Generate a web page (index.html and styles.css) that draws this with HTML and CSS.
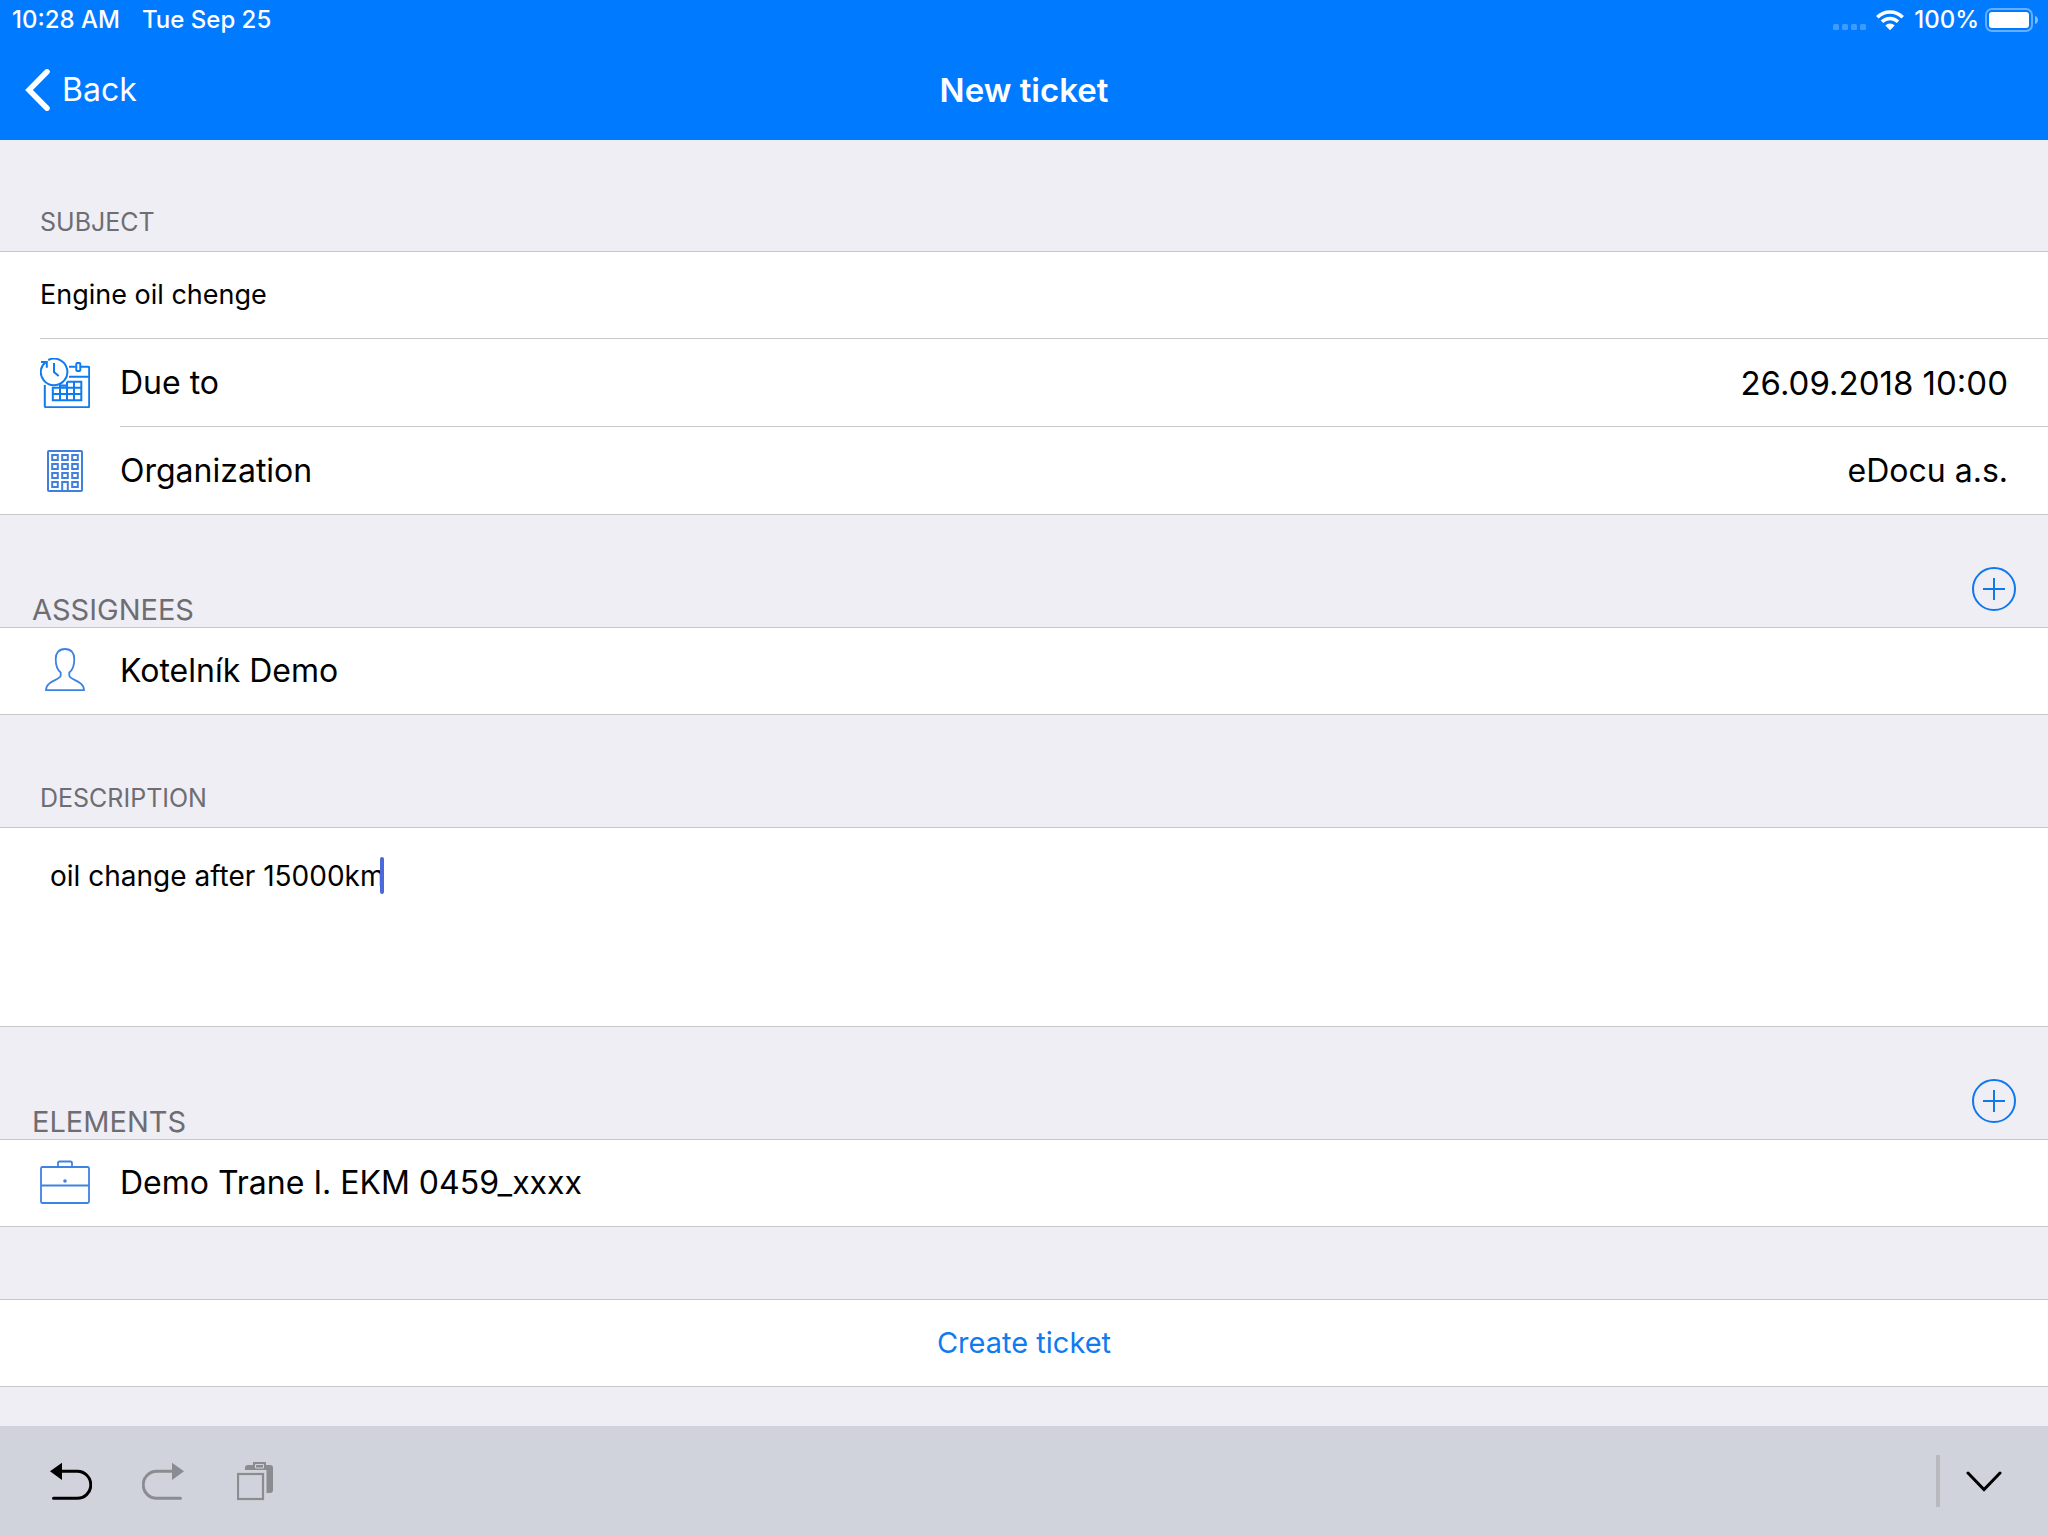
FILE: index.html
```html
<!DOCTYPE html>
<html lang="en">
<head>
<meta charset="utf-8">
<meta name="viewport" content="width=device-width, initial-scale=1">
<title>New ticket</title>
<link rel="stylesheet" href="styles.css">
</head>
<body>
<header class="header">
  <div class="status">
    <span>10:28 AM</span>
    <span class="status-date">Tue Sep 25</span>
    <svg class="status-dots" width="34" height="24" viewBox="0 0 34 24" aria-hidden="true"><g fill="#fff" opacity=".25"><rect x="0" y="16" width="6" height="6" rx="1.5"/><rect x="9" y="16" width="6" height="6" rx="1.5"/><rect x="18" y="16" width="6" height="6" rx="1.5"/><rect x="27" y="16" width="6" height="6" rx="1.5"/></g></svg>
    <svg width="28" height="24" viewBox="0 0 28 24" aria-hidden="true"><g fill="none" stroke="#fff" stroke-width="3.6"><path d="M1.3 9.2a18 18 0 0 1 25.4 0"/><path d="M6 13.8a11.4 11.4 0 0 1 16 0"/></g><path d="M14 22.2l-4.7-4.8a6.7 6.7 0 0 1 9.4 0z" fill="#fff"/></svg>
    <span class="status-level">100%</span>
    <svg width="54" height="24" viewBox="0 0 54 24" aria-hidden="true"><rect x="1" y="1" width="46" height="22" rx="6" fill="none" stroke="#fff" stroke-width="2" opacity=".4"/><rect x="4" y="4" width="40" height="16" rx="3" fill="#fff"/><path d="M50 8c4 1 4 7 0 8z" fill="#fff" opacity=".5"/></svg>
  </div>
  <nav class="navbar">
    <a class="back" href="#"><svg width="26" height="44" viewBox="0 0 26 44" aria-hidden="true"><path d="M23 3.800L5 22l18 18.200" fill="none" stroke="#fff" stroke-width="5.500" stroke-linecap="round"/></svg>Back</a>
    <h1 class="title">New ticket</h1>
  </nav>
</header>

<main class="form">
  <div class="section-head section-head-first"><label class="section-label" for="subject">SUBJECT</label></div>
  <div class="group">
    <div class="row row-plain"><div class="row-body"><input class="subject" id="subject" type="text" value="Engine oil chenge"></div></div>
    <div class="row">
      <svg class="icon" viewBox="0 0 50 50" aria-hidden="true"><g fill="none" stroke="#0f7bf0" stroke-width="2">
        <path d="M8.200 2A13.300 13.300 0 1 1 1 11.500Q1.500 8 5.600 4M1 4h5.800v5.800M14 5v9l4.700 4"/>
        <path d="M29 8.800h6.800M40.500 8.800H48q1.200 0 1.200 1.200v38q0 1.200-1.200 1.200H6Q4.800 49.200 4.800 48V27M29 18.800h20"/><rect x="36.300" y="5" width="4" height="8" rx="1"/>
        <path d="M27 23.800h14.300v18.400H12.800V29.800h28.500M12.800 36h28.500M20 42V27.500h7M27 42V23.800M34 42V23.800"/></g></svg>
      <div class="row-body"><span>Due to</span><span class="value">26.09.2018 10:00</span></div>
    </div>
    <div class="row">
      <svg class="icon" viewBox="0 0 50 50" aria-hidden="true"><g fill="none" stroke="#407fdc" stroke-width="2">
        <rect x="8" y="5" width="34" height="40" rx="1"/>
        <path d="M12.200 9h5.600v5h-5.600zM22.200 9h5.600v5h-5.600zM32.200 9h5.600v5h-5.600zM12.200 18h5.600v5h-5.600zM22.200 18h5.600v5h-5.600zM32.200 18h5.600v5h-5.600zM12.200 27h5.600v5h-5.600zM22.200 27h5.600v5h-5.600zM32.200 27h5.600v5h-5.600zM12.200 36h5.600v5h-5.600zM32.200 36h5.600v5h-5.600zM22.200 45v-9h5.600v9"/></g></svg>
      <div class="row-body"><span>Organization</span><span>eDocu a.s.</span></div>
    </div>
  </div>

  <div class="section-head section-head-add">
    <h2 class="section-label">ASSIGNEES</h2>
    <button class="add" type="button" aria-label="Add assignee"><svg width="44" height="44" viewBox="0 0 44 44" fill="none" stroke="#0f78ec" stroke-width="2"><circle cx="22" cy="22" r="21"/><path d="M22 11v22M11 22h22"/></svg></button>
  </div>
  <div class="group">
    <div class="row">
      <svg class="icon" viewBox="0 0 50 50" aria-hidden="true"><path d="M25 3C18.500 3 15.700 7.500 15.700 13C15.700 20 17.500 24 20.700 26.500V29.500C20.700 34 6 34.500 6 44.200H44C44 34.500 29.300 34 29.300 29.500V26.500C32.500 24 34.300 20 34.300 13C34.300 7.500 31.500 3 25 3Z" fill="none" stroke="#3f83e2" stroke-width="1.800"/></svg>
      <div class="row-body"><span>Kotelník Demo</span></div>
    </div>
  </div>

  <div class="section-head"><label class="section-label" for="description">DESCRIPTION</label></div>
  <div class="group group-note">
    <textarea class="note" id="description">oil change after 15000km</textarea>
    <span class="caret"></span>
  </div>

  <div class="section-head section-head-add">
    <h2 class="section-label">ELEMENTS</h2>
    <button class="add" type="button" aria-label="Add element"><svg width="44" height="44" viewBox="0 0 44 44" fill="none" stroke="#0f78ec" stroke-width="2"><circle cx="22" cy="22" r="21"/><path d="M22 11v22M11 22h22"/></svg></button>
  </div>
  <div class="group">
    <div class="row">
      <svg class="icon" viewBox="0 0 50 50" aria-hidden="true"><g fill="none" stroke="#3f83e2" stroke-width="1.800"><rect x="1" y="9" width="48" height="36" rx="1.500"/><path d="M18 9V5q0-1.500 1.500-1.500h11Q32 3.500 32 5v4M1 27.500h48"/></g><circle cx="25" cy="23" r="1.800" fill="#3f83e2"/></svg>
      <div class="row-body"><span>Demo Trane I. EKM 0459_xxxx</span></div>
    </div>
  </div>

  <button class="create" type="submit">Create ticket</button>
</main>

<footer class="toolbar">
  <button class="tool" type="button" aria-label="Undo"><svg width="42" height="40" viewBox="0 0 42 40"><path d="M0 10.300L12 1.700v17.300z"/><path d="M10 10.300h17.300a13.500 13.500 0 0 1 0 27H3.500" fill="none" stroke="#000" stroke-width="3" stroke-linecap="round"/></svg></button>
  <button class="tool" type="button" aria-label="Redo"><svg width="42" height="40" viewBox="0 0 42 40"><path d="M42 10.300L30 1.700v17.300z" fill="#8b8c90"/><path d="M32 10.300H14.700a13.500 13.500 0 0 0 0 27h23.800" fill="none" stroke="#8b8c90" stroke-width="3" stroke-linecap="round"/></svg></button>
  <button class="tool tool-paste" type="button" aria-label="Paste"><svg width="36" height="40" viewBox="0 0 36 40"><rect x="1" y="13" width="25" height="25" fill="none" stroke="#8b8c90" stroke-width="2.200"/><path d="M8 9V7q0-3 3-3h5V1h13v3h4q3 0 3 3v22q0 3-3 3h-3.500V9z" fill="#8b8c90"/><path d="M18.500 3.500h8v3.500h-8z" fill="none" stroke="#d0d3db" stroke-width="1"/></svg></button>
  <span class="divider"></span>
  <button class="tool" type="button" aria-label="Hide keyboard"><svg width="36" height="24" viewBox="0 0 36 24"><path d="M2 4l16 16.500L34 4" fill="none" stroke="#000" stroke-width="3" stroke-linecap="round"/></svg></button>
</footer>
</body>
</html>
```

FILE: styles.css
```css
* {
  box-sizing: border-box;
}

body {
  display: flex;
  flex-direction: column;
  min-height: 100vh;
  margin: 0;
  background: #efeef5;
  color: #000;
  font-family: Inter, "Liberation Sans", sans-serif;
  font-size: 32px;
  line-height: 40px;
}

button,
input,
textarea {
  margin: 0;
  padding: 0;
  border: 0;
  border-radius: 0;
  outline: 0;
  background: none;
  color: inherit;
  font: inherit;
}

svg {
  display: block;
  flex: none;
}

.header {
  background: #007aff;
  color: #fff;
}

.status {
  display: flex;
  align-items: center;
  height: 40px;
  padding: 0 9px 0 12px;
  font-size: 24px;
  font-weight: 500;
}

.status-date {
  margin-left: 22px;
}

.status-dots {
  margin-right: 9px;
  margin-left: auto;
}

.status-level {
  margin: 0 6px 0 10px;
}

.navbar {
  display: grid;
  grid-template-columns: 1fr auto 1fr;
  align-items: center;
  height: 100px;
  padding: 0 24px;
}

.back {
  display: flex;
  align-items: center;
  gap: 12px;
  color: inherit;
  text-decoration: none;
}

.title {
  margin: 0;
  font-size: 33px;
  font-weight: 600;
}

.section-head {
  display: flex;
  align-items: flex-end;
  justify-content: space-between;
  height: 112px;
  padding: 0 32px 12px 40px;
  color: #6d6d72;
  font-size: 25px;
  line-height: 34px;
}

.section-head-first {
  height: 111px;
}

.section-head-add {
  padding: 0 32px;
  font-size: 29px;
}

.section-label {
  margin: 0;
  font-size: inherit;
  font-weight: 400;
}

.add {
  margin-bottom: 16px;
  cursor: pointer;
}

.group {
  border-top: 1px solid #c8c7cc;
  border-bottom: 1px solid #c8c7cc;
  background: #fff;
}

.row {
  display: flex;
  align-items: center;
  gap: 30px;
  padding-left: 40px;
}

.icon {
  width: 50px;
  height: 50px;
}

.row-body {
  display: flex;
  flex: 1;
  align-items: center;
  justify-content: space-between;
  height: 86px;
  padding-right: 40px;
}

.row + .row {
  height: 88px;
}

.row + .row .row-body {
  height: 88px;
}

/* Separators start where the text of the row above starts. */
.row-body {
  position: relative;
}

.row:not(:last-child) .row-body {
  border-bottom: 1px solid #c8c7cc;
}

.row-plain .row-body {
  height: 87px;
}

.row + .row:last-child,
.row + .row:last-child .row-body {
  height: 87px;
}

.value {
  font-size: 33px;
}

.subject {
  width: 100%;
  font-size: 27px;
}

.group-note {
  position: relative;
  height: 200px;
}

.note {
  display: block;
  width: 100%;
  height: 100%;
  padding: 28px 50px;
  resize: none;
  font-size: 28px;
}

.caret {
  position: absolute;
  top: 29px;
  left: 380px;
  width: 4px;
  height: 37px;
  border-radius: 2px;
  background: #4a69dc;
}

.create {
  display: block;
  width: 100%;
  height: 88px;
  margin: 72px 0 39px;
  border-top: 1px solid #c8c7cc;
  border-bottom: 1px solid #c8c7cc;
  background: #fff;
  color: #0f7bf0;
  font-size: 29px;
  cursor: pointer;
}

.toolbar {
  display: flex;
  align-items: center;
  gap: 50px;
  height: 110px;
  margin-top: auto;
  padding: 0 46px 0 50px;
  background: #d0d3db;
}

.tool-paste {
  margin-left: 3px;
}

.divider {
  width: 4px;
  height: 52px;
  margin-right: -24px;
  margin-left: auto;
  background: #b8babf;
}
```
